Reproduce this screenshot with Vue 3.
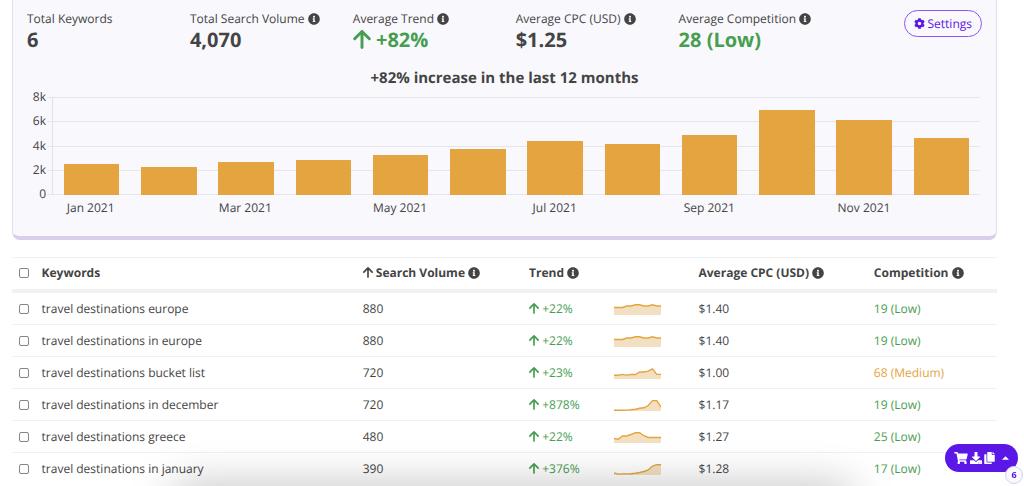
<script setup>
import { ref } from 'vue'

const INFO =
  'M256 8C119.043 8 8 119.083 8 256c0 136.997 111.043 248 248 248s248-111.003 248-248C504 119.083 392.957 8 256 8zm0 110c23.196 0 42 18.804 42 42s-18.804 42-42 42-42-18.804-42-42 18.804-42 42-42zm56 254c0 6.627-5.373 12-12 12h-88c-6.627 0-12-5.373-12-12v-24c0-6.627 5.373-12 12-12h12v-64h-12c-6.627 0-12-5.373-12-12v-24c0-6.627 5.373-12 12-12h64c6.627 0 12 5.373 12 12v100h12c6.627 0 12 5.373 12 12v24z'
const ARROW = 'M7 13V2M2 7L7 2L12 7'

const stats = [
  { label: 'Total Keywords', value: '6' },
  { label: 'Total Search Volume', value: '4,070', info: true },
  { label: 'Average Trend', value: '+82%', info: true, good: true, arrow: true },
  { label: 'Average CPC (USD)', value: '$1.25', info: true },
  { label: 'Average Competition', value: '28 (Low)', info: true, good: true },
]

const max = 8000
const ticks = ['8k', '6k', '4k', '2k', '0']
const months = [
  { label: 'Jan 2021', volume: 2520 },
  { label: '', volume: 2260 },
  { label: 'Mar 2021', volume: 2680 },
  { label: '', volume: 2880 },
  { label: 'May 2021', volume: 3230 },
  { label: '', volume: 3790 },
  { label: 'Jul 2021', volume: 4390 },
  { label: '', volume: 4140 },
  { label: 'Sep 2021', volume: 4930 },
  { label: '', volume: 6980 },
  { label: 'Nov 2021', volume: 6140 },
  { label: '', volume: 4620 },
]

const europe = [7.5, 7.5, 7.5, 9, 9, 10.2, 10.2, 9, 9, 10.2, 9, 9]
const rows = ref([
  { keyword: 'travel destinations europe', volume: 880, trend: '+22%', cpc: '$1.40', comp: '19 (Low)', level: 'low', spark: europe },
  { keyword: 'travel destinations in europe', volume: 880, trend: '+22%', cpc: '$1.40', comp: '19 (Low)', level: 'low', spark: europe },
  { keyword: 'travel destinations bucket list', volume: 720, trend: '+23%', cpc: '$1.00', comp: '68 (Medium)', level: 'medium', spark: [3.8, 3.8, 4.6, 3.9, 4.5, 4.5, 7, 7, 7.8, 10.2, 4.6, 4.6] },
  { keyword: 'travel destinations in december', volume: 720, trend: '+878%', cpc: '$1.17', comp: '19 (Low)', level: 'low', spark: [0.7, 0.7, 0.8, 0.9, 1.2, 1.7, 2.7, 3.2, 5.5, 10.4, 10.4, 4] },
  { keyword: 'travel destinations greece', volume: 480, trend: '+22%', cpc: '$1.27', comp: '25 (Low)', level: 'low', spark: [4.5, 3.7, 7, 7, 8.5, 10.3, 10.3, 7.3, 5.5, 5.5, 5.5, 5.5] },
  { keyword: 'travel destinations in january', volume: 390, trend: '+376%', cpc: '$1.28', comp: '17 (Low)', level: 'low', spark: [2.2, 0.9, 1.1, 1.1, 1.3, 1.8, 2.5, 3.5, 5, 9, 10.3, 10.3] },
])

const linePoints = (values) =>
  values.map((v, i) => `${((i * 47) / (values.length - 1)).toFixed(1)},${(12 - v).toFixed(1)}`).join(' ')
const areaPoints = (values) => `0,12 ${linePoints(values)} 47,12`
</script>

<template>
  <main class="page">
    <section class="summary">
      <div class="top">
        <dl class="stats">
          <div v-for="s in stats" :key="s.label" class="stat">
            <dt>
              {{ s.label }}
              <svg v-if="s.info" class="info" viewBox="0 0 512 512" aria-hidden="true"><path :d="INFO" /></svg>
            </dt>
            <dd :class="{ good: s.good }">
              <svg v-if="s.arrow" class="arrow big" viewBox="1 1 12 13" aria-hidden="true"><path :d="ARROW" /></svg>
              {{ s.value }}
            </dd>
          </div>
        </dl>
        <button type="button" class="settings">
          <svg class="gear" viewBox="0 0 512 512" aria-hidden="true">
            <path d="M487.4 315.7l-42.6-24.6c4.3-23.2 4.3-47 0-70.2l42.6-24.6c4.9-2.8 7.1-8.6 5.5-14-11.1-35.6-30-67.8-54.7-94.6-3.8-4.1-10-5.1-14.8-2.3L380.8 110c-17.9-15.4-38.5-27.3-60.8-35.1V25.8c0-5.6-3.9-10.5-9.4-11.7-36.7-8.2-74.3-7.8-109.2 0-5.5 1.2-9.4 6.1-9.4 11.7V75c-22.2 7.9-42.8 19.8-60.8 35.1L88.7 85.5c-4.9-2.8-11-1.9-14.8 2.3-24.7 26.7-43.6 58.9-54.7 94.6-1.7 5.4.6 11.2 5.5 14L67.3 221c-4.3 23.2-4.3 47 0 70.2l-42.6 24.6c-4.9 2.8-7.1 8.6-5.5 14 11.1 35.6 30 67.8 54.7 94.6 3.8 4.1 10 5.1 14.8 2.3l42.6-24.6c17.9 15.4 38.5 27.3 60.8 35.1v49.2c0 5.6 3.9 10.5 9.4 11.7 36.7 8.2 74.3 7.8 109.2 0 5.5-1.2 9.4-6.1 9.4-11.7v-49.2c22.2-7.9 42.8-19.8 60.8-35.1l42.6 24.6c4.9 2.8 11 1.9 14.8-2.3 24.7-26.7 43.6-58.9 54.7-94.6 1.5-5.5-.7-11.3-5.6-14.1zM256 336c-44.1 0-80-35.9-80-80s35.9-80 80-80 80 35.9 80 80-35.9 80-80 80z" />
          </svg>
          Settings
        </button>
      </div>

      <h2>+82% increase in the last 12 months</h2>

      <div class="chart">
        <div class="ticks">
          <span v-for="t in ticks" :key="t">{{ t }}</span>
        </div>
        <div class="plot">
          <div class="lines"><i v-for="t in ticks" :key="t"></i></div>
          <div v-for="(m, i) in months" :key="i" class="slot">
            <div class="bar" :style="{ height: (m.volume / max) * 100 + '%' }"></div>
          </div>
        </div>
        <div class="months">
          <span v-for="(m, i) in months" :key="i">{{ m.label }}</span>
        </div>
      </div>
    </section>

    <table>
      <colgroup>
        <col class="c-check" /><col class="c-keyword" /><col class="c-volume" /><col class="c-trend" />
        <col class="c-spark" /><col class="c-cpc" /><col class="c-comp" />
      </colgroup>
      <thead>
        <tr>
          <th class="check"><input type="checkbox" aria-label="Select all keywords" /></th>
          <th>Keywords</th>
          <th>
            <svg class="arrow" viewBox="1 1 12 13" aria-hidden="true"><path :d="ARROW" /></svg>
            Search Volume
            <svg class="info" viewBox="0 0 512 512" aria-hidden="true"><path :d="INFO" /></svg>
          </th>
          <th colspan="2">
            Trend
            <svg class="info" viewBox="0 0 512 512" aria-hidden="true"><path :d="INFO" /></svg>
          </th>
          <th>
            Average CPC (USD)
            <svg class="info" viewBox="0 0 512 512" aria-hidden="true"><path :d="INFO" /></svg>
          </th>
          <th>
            Competition
            <svg class="info" viewBox="0 0 512 512" aria-hidden="true"><path :d="INFO" /></svg>
          </th>
        </tr>
      </thead>
      <tbody>
        <tr v-for="(r, i) in rows" :key="r.keyword">
          <td class="check"><input :id="'kw' + i" type="checkbox" /></td>
          <td><label :for="'kw' + i">{{ r.keyword }}</label></td>
          <td>{{ r.volume }}</td>
          <td class="low">
            <svg class="arrow" viewBox="1 1 12 13" aria-hidden="true"><path :d="ARROW" /></svg>
            {{ r.trend }}
          </td>
          <td>
            <svg class="spark" viewBox="0 0 47 12" aria-hidden="true">
              <polygon :points="areaPoints(r.spark)" />
              <polyline :points="linePoints(r.spark)" />
            </svg>
          </td>
          <td>{{ r.cpc }}</td>
          <td :class="r.level">{{ r.comp }}</td>
        </tr>
      </tbody>
    </table>

    <div class="drawer"></div>

    <button type="button" class="cart" aria-label="Selected keywords actions">
      <svg class="i-cart" viewBox="0 0 576 512" aria-hidden="true">
        <path d="M528.12 301.319l47.273-208C578.806 78.301 567.391 64 551.99 64H159.208l-9.166-44.81C147.758 8.021 137.93 0 126.529 0H24C10.745 0 0 10.745 0 24v16c0 13.255 10.745 24 24 24h69.883l70.248 343.435C147.325 417.1 136 435.222 136 456c0 30.928 25.072 56 56 56s56-25.072 56-56c0-15.674-6.447-29.835-16.824-40h209.647C430.447 426.165 424 440.326 424 456c0 30.928 25.072 56 56 56s56-25.072 56-56c0-22.172-12.888-41.332-31.579-50.405l5.517-24.276c3.413-15.018-8.002-29.319-23.403-29.319H218.117l-6.545-32h293.145c11.206 0 20.92-7.754 23.403-18.681z" />
      </svg>
      <svg class="i-down" viewBox="0 0 512 512" aria-hidden="true">
        <path d="M216 0h80c13.3 0 24 10.7 24 24v168h87.7c17.8 0 26.7 21.5 14.1 34.1L269.7 378.3c-7.5 7.5-19.8 7.5-27.3 0L90.1 226.1c-12.6-12.6-3.7-34.1 14.1-34.1H192V24c0-13.3 10.7-24 24-24zm296 376v112c0 13.3-10.7 24-24 24H24c-13.3 0-24-10.7-24-24V376c0-13.3 10.7-24 24-24h146.7l49 49c20.1 20.1 52.5 20.1 72.6 0l49-49H488c13.3 0 24 10.7 24 24zm-124 88c0-11-9-20-20-20s-20 9-20 20 9 20 20 20 20-9 20-20zm64 0c0-11-9-20-20-20s-20 9-20 20 9 20 20 20 20-9 20-20z" />
      </svg>
      <svg class="i-copy" viewBox="0 0 448 512" aria-hidden="true">
        <path d="M320 448v40c0 13.255-10.745 24-24 24H24c-13.255 0-24-10.745-24-24V120c0-13.255 10.745-24 24-24h72v296c0 30.879 25.121 56 56 56h168zm0-344V0H152c-13.255 0-24 10.745-24 24v368c0 13.255 10.745 24 24 24h272c13.255 0 24-10.745 24-24V128H344c-13.2 0-24-10.8-24-24zm120.971-31.029L375.029 7.029A24 24 0 0 0 358.059 0H352v96h96v-6.059a24 24 0 0 0-7.029-16.97z" />
      </svg>
      <svg class="i-caret" viewBox="0 0 8 4" aria-hidden="true"><path d="M0 4L4 0L8 4Z" /></svg>
      <span class="count">6</span>
    </button>
  </main>
</template>

<style>
body {
  overflow: hidden;
  background: #fff;
}
</style>

<style scoped>
.page {
  padding: 0 27px 0 12px;
  font-family: 'Open Sans', 'Noto Sans', sans-serif;
  font-size: 12px;
  line-height: 16px;
  color: #444;
  text-rendering: geometricPrecision;
}
svg {
  fill: currentColor;
}
.info {
  width: 12px;
  height: 12px;
  vertical-align: -2px;
}
.arrow {
  width: 10px;
  height: 11px;
  vertical-align: -1px;
}
.arrow path {
  fill: none;
  stroke: currentColor;
  stroke-width: 2;
  stroke-linecap: round;
  stroke-linejoin: round;
}
.arrow.big {
  width: 18px;
  height: 19px;
  vertical-align: -2px;
}

.summary {
  padding: 10px 14px 20px;
  border: solid #e2e0ea;
  border-width: 0 1px 4px;
  border-bottom-color: #d9ceec;
  border-radius: 0 0 8px 8px;
  background: #f9f8fd;
}
.top {
  display: flex;
  align-items: flex-start;
}
.stats {
  flex: 1;
  display: grid;
  grid-template-columns: repeat(5, 1fr);
  margin: 0;
  padding: 1px 62px 0 0;
}
.stat {
  white-space: nowrap;
}
dd {
  margin: 0;
  font-size: 20px;
  line-height: 26px;
  font-weight: 700;
}
.good,
.low {
  color: #469e50;
}
.medium {
  color: #e4a540;
}
.settings {
  display: flex;
  align-items: center;
  gap: 3px;
  height: 27px;
  padding: 0 9px;
  border: 1px solid #8a55f2;
  border-radius: 14px;
  background: transparent;
  color: #5a17e6;
  font: inherit;
  text-rendering: inherit;
}
.gear {
  width: 11px;
  height: 11px;
}
h2 {
  margin: 16px 0 10px;
  font-size: 15px;
  line-height: 18px;
  font-weight: 700;
  text-align: center;
}

.chart {
  display: grid;
  grid-template-columns: 19px 1fr;
  grid-template-rows: 98px auto;
  column-gap: 6px;
  padding-right: 2px;
}
.ticks {
  display: flex;
  flex-direction: column;
  justify-content: space-between;
  margin: -8px 0 -7px;
  text-align: right;
}
.plot {
  position: relative;
  display: flex;
  border-left: 1px solid #e2e1e7;
}
.lines {
  position: absolute;
  inset: 0 0 0 -6px;
  display: flex;
  flex-direction: column;
  justify-content: space-between;
}
.lines i {
  height: 1px;
  background: #e6e5eb;
}
.slot {
  position: relative;
  flex: 1;
  display: flex;
  align-items: flex-end;
  justify-content: center;
}
.bar {
  width: 72%;
  background: #e4a540;
}
.months {
  grid-column: 2;
  display: grid;
  grid-template-columns: repeat(12, 1fr);
  padding-top: 5px;
  text-align: center;
  white-space: nowrap;
}

table {
  width: 100%;
  margin-top: 17px;
  table-layout: fixed;
  border-collapse: separate;
  border-spacing: 0;
}
.c-check { width: 3%; }
.c-keyword { width: 32.6%; }
.c-volume { width: 16.9%; }
.c-trend { width: 8.6%; }
.c-spark { width: 8.6%; }
.c-cpc { width: 17.8%; }
.c-comp { width: 12.5%; }
th,
td {
  padding: 8px 0 7px;
  text-align: left;
  white-space: nowrap;
  border-bottom: 1px solid #f1f1f1;
}
th {
  padding: 7px 0 8px;
  border-top: 1px solid #f1f1f1;
  border-bottom: 4px solid #f1f1f1;
}
tbody tr:last-child td {
  border-bottom: 0;
}
.check {
  line-height: 0;
  padding-left: 7px;
}
input {
  appearance: none;
  width: 10px;
  height: 10px;
  margin: 0;
  border: 1px solid #858585;
  border-radius: 2px;
  background: #fff;
}
.spark {
  display: block;
  width: 47px;
  height: 12px;
}
.spark polygon {
  fill: #f3e0c0;
}
.spark polyline {
  fill: none;
  stroke: #e4a540;
  stroke-width: 1.4;
}

.drawer {
  position: fixed;
  left: 17%;
  right: 17%;
  bottom: -24px;
  height: 20px;
  box-shadow: 0 0 44px rgba(0, 0, 0, 0.4);
}
.cart {
  position: fixed;
  right: 6px;
  bottom: 14px;
  display: flex;
  align-items: center;
  gap: 2px;
  height: 28px;
  padding: 0 9px;
  border: 0;
  border-radius: 14px;
  background: #5a17e6;
  color: #fff;
  font: inherit;
}
.i-cart { width: 14px; height: 12px; }
.i-down { width: 12px; height: 12px; }
.i-copy { width: 11px; height: 12px; }
.i-caret { width: 7px; height: 4px; margin-left: 5px; }
.count {
  position: absolute;
  right: -5px;
  bottom: -12px;
  width: 16px;
  border: 1px solid #d9ceec;
  border-radius: 50%;
  background: #f9f8fd;
  color: #5a17e6;
  font-size: 9px;
  font-weight: 700;
  line-height: 16px;
  text-align: center;
}
</style>
